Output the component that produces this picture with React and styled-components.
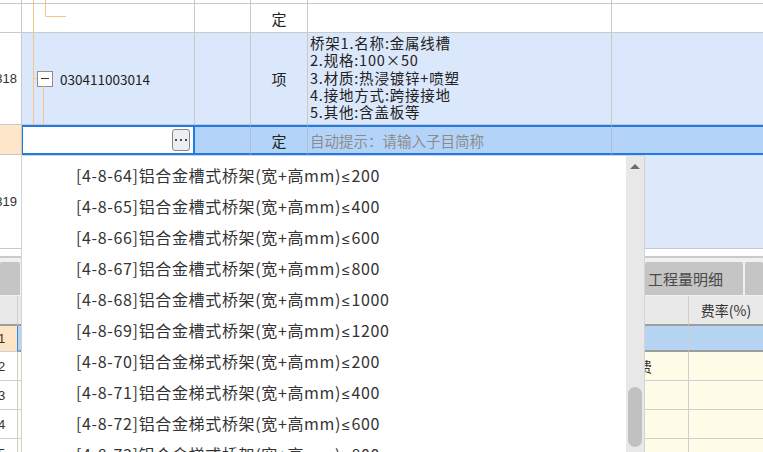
import React from 'react';
import styled, { createGlobalStyle } from 'styled-components';

const GlobalStyle = createGlobalStyle`
  * { box-sizing: border-box; }
  html, body { margin: 0; padding: 0; background: #fff; }
  body {
    font-family: "Noto Sans CJK SC", "Liberation Sans", sans-serif;
    color: #222;
    overflow: hidden;
  }
`;

const TOP_COLS = '22px 173px 56px 57px 304px 1fr';
const BOTTOM_COLS = '18px 100px 420px 151px 1fr';

const Page = styled.div`
  position: relative;
  width: 763px;
  height: 452px;
  overflow: hidden;
  background: #fff;
`;

const Row = styled.div`
  display: grid;
  grid-template-columns: ${p => p.$cols || TOP_COLS};
  height: ${p => p.$h}px;
`;

const Cell = styled.div`
  position: relative;
  display: flex;
  align-items: ${p => p.$top ? 'flex-start' : 'center'};
  justify-content: ${p => p.$align || 'flex-start'};
  overflow: hidden;
  white-space: nowrap;
  background: ${p => p.$bg || 'transparent'};
  border-right: ${p => p.$last ? 'none' : `1px solid ${p.$line || '#c9c9c9'}`};
  border-bottom: ${p => `${p.$bottomW || 1}px solid ${p.$bottom || '#c9c9c9'}`};
  font-size: 15px;
  color: #222;
`;

const RowNo = styled.span`
  font-family: "Liberation Sans", sans-serif;
  font-size: 13px;
  color: #333;
  padding-right: ${p => p.$right ? 4 : 0}px;
  margin-left: ${p => p.$right ? 0 : -2}px;
`;

const TreeSvg = styled.svg`
  position: absolute;
  left: 0;
  top: 0;
  pointer-events: none;
`;

const TreeLine = ({ h, children }) => (
  <TreeSvg width="173" height={h} viewBox={`0 0 173 ${h}`}>
    <g stroke="#f7c48a" strokeWidth="1" fill="none">{children}</g>
  </TreeSvg>
);

const CodeWrap = styled.div`
  display: flex;
  align-items: center;
  gap: 7px;
  padding-left: 15px;
`;

const MinusBox = styled.span`
  display: inline-flex;
  align-items: center;
  justify-content: center;
  width: 16px;
  height: 16px;
  border: 1px solid #8d8d8d;
  background: #fff;
  &::after {
    content: '';
    width: 8px;
    height: 1px;
    background: #333;
  }
`;

const Code = styled.span`
  font-size: 13.5px;
  color: #222;
`;

const Desc = styled.div`
  display: flex;
  flex-direction: column;
  padding: 1px 0 0 2px;
  font-size: 14.5px;
  letter-spacing: 0.8px;
  color: #222;
  span {
    display: block;
    height: 17.3px;
    line-height: 17.3px;
  }
`;

const EditBox = styled.div`
  display: flex;
  align-items: center;
  justify-content: flex-end;
  margin-left: -1px;
  padding-right: 3px;
  background: #fff;
  border: 2px solid #1f7be6;
`;

const MoreButton = styled.span`
  display: flex;
  align-items: center;
  justify-content: center;
  gap: 3px;
  width: 18px;
  height: 22px;
  border: 1px solid #868686;
  border-radius: 3px;
  background: #eceef3;
  span {
    width: 2px;
    height: 2px;
    background: #4a4a4a;
  }
`;

const EditCell = styled(Cell)`
  background: #b3d4f8;
  border-top: 2px solid #1f7be6;
  border-bottom: 2px solid #1f7be6;
  border-right-color: #a7bfd9;
`;

const Hint = styled.span`
  padding-left: 2px;
  font-size: 14.5px;
  color: #8c8c8c;
`;

const Gap = styled.div`
  height: 9px;
  background: #fff;
  border-bottom: 2px solid #cacaca;
`;

const TabBar = styled.div`
  display: flex;
  align-items: flex-start;
  gap: 2px;
  height: 38px;
  padding-top: 4px;
  background: #f0f0f0;
`;

const Tab = styled.div`
  flex: ${p => p.$grow ? 1 : 'none'};
  width: ${p => p.$w ? `${p.$w}px` : 'auto'};
  height: 33px;
  display: flex;
  align-items: center;
  padding-left: 3px;
  border-radius: 2px 2px 0 0;
  background: ${p => p.$grow ? 'transparent' : '#c5c5c5'};
  font-size: 15px;
  color: #4a4a4a;
  white-space: nowrap;
  overflow: hidden;
`;

const Dropdown = styled.div`
  position: absolute;
  left: 21px;
  top: 155px;
  width: 624px;
  height: 310px;
  display: flex;
  background: #fff;
  border: 1px solid #d3d3d3;
`;

const List = styled.ul`
  flex: 1;
  margin: 0;
  padding: 4px 0 0 54px;
  list-style: none;
`;

const Item = styled.li`
  height: 31px;
  line-height: 31px;
  font-size: 16px;
  letter-spacing: 0.65px;
  color: #333;
  white-space: nowrap;
`;

const LessEq = styled.span`
  font-family: "Liberation Sans", "DejaVu Sans", sans-serif;
  font-size: 14px;
  margin: 0 1px;
`;

const Scrollbar = styled.div`
  width: 18px;
  display: flex;
  flex-direction: column;
  align-items: center;
  background: #e8e8e8;
`;

const UpArrow = styled.div`
  height: 20px;
  padding-top: 8px;
  &::before {
    content: '';
    display: block;
    width: 0;
    height: 0;
    border-left: 5px solid transparent;
    border-right: 5px solid transparent;
    border-bottom: 5px solid #6b6b6b;
  }
`;

const Thumb = styled.div`
  width: 14px;
  height: 60px;
  margin-top: 211px;
  border-radius: 7px;
  background: #c1c1c1;
`;

const CellText = styled.span`
  font-size: 14px;
  color: #333;
  padding-left: ${p => p.$pad || 0}px;
`;

const items = [
  ['[4-8-64]铝合金槽式桥架(宽+高mm)', '200'],
  ['[4-8-65]铝合金槽式桥架(宽+高mm)', '400'],
  ['[4-8-66]铝合金槽式桥架(宽+高mm)', '600'],
  ['[4-8-67]铝合金槽式桥架(宽+高mm)', '800'],
  ['[4-8-68]铝合金槽式桥架(宽+高mm)', '1000'],
  ['[4-8-69]铝合金槽式桥架(宽+高mm)', '1200'],
  ['[4-8-70]铝合金梯式桥架(宽+高mm)', '200'],
  ['[4-8-71]铝合金梯式桥架(宽+高mm)', '400'],
  ['[4-8-72]铝合金梯式桥架(宽+高mm)', '600'],
  ['[4-8-73]铝合金梯式桥架(宽+高mm)', '800'],
];

const descLines = [
  '桥架1.名称:金属线槽',
  '2.规格:100×50',
  '3.材质:热浸镀锌+喷塑',
  '4.接地方式:跨接接地',
  '5.其他:含盖板等',
];

const BLUE = '#dbe7fb';
const LIGHT_BLUE = '#dde9fb';

function BottomRow({ no, kind, h, text }) {
  const selected = kind === 'selected';
  const header = kind === 'header';
  const bg = header ? '#e9e9e9' : selected ? '#b6d5f2' : '#fffde8';
  const bottom = header || selected ? '#9d9d9d' : '#cfcfcf';
  const bw = header || selected ? 2 : 1;
  return (
    <Row $cols={BOTTOM_COLS} $h={h}>
      <Cell
        $bg={header ? '#e9e9e9' : selected ? '#fde4c4' : '#fff'}
        $bottom={header ? '#9d9d9d' : '#cfcfcf'}
        $bottomW={header ? 2 : 1}
        $line={selected ? '#3c8ae0' : '#cfcfcf'}
      >
        {no && <RowNo>{no}</RowNo>}
      </Cell>
      <Cell $bg={bg} $bottom={bottom} $bottomW={bw} $line="#cfcfcf" />
      <Cell $bg={bg} $bottom={bottom} $bottomW={bw} $line="#cfcfcf" />
      <Cell $bg={bg} $bottom={bottom} $bottomW={bw} $line="#cfcfcf">
        {text && <CellText $pad={16}>{text}</CellText>}
      </Cell>
      <Cell $bg={bg} $bottom={bottom} $bottomW={bw} $align="center" $last>
        {header && <CellText>费率(%)</CellText>}
      </Cell>
    </Row>
  );
}

export default function App() {
  return (
    <Page>
      <GlobalStyle />

      <Row $h={4}>
        <Cell />
        <Cell>
          <TreeLine h={4}>
            <path d="M11.5 0V4M23.5 0V4" />
          </TreeLine>
        </Cell>
        <Cell />
        <Cell />
        <Cell />
        <Cell $last />
      </Row>

      <Row $h={29}>
        <Cell />
        <Cell>
          <TreeLine h={29}>
            <path d="M11.5 0V29M23.5 0V12.5H44" />
          </TreeLine>
        </Cell>
        <Cell />
        <Cell $align="center">定</Cell>
        <Cell />
        <Cell $last />
      </Row>

      <Row $h={92}>
        <Cell $align="flex-end">
          <RowNo $right>318</RowNo>
        </Cell>
        <Cell $bg={BLUE}>
          <TreeLine h={92}>
            <path d="M11.5 0V92M11 45.5H15M21.5 53V92" />
          </TreeLine>
          <CodeWrap>
            <MinusBox />
            <Code>030411003014</Code>
          </CodeWrap>
        </Cell>
        <Cell $bg={BLUE} />
        <Cell $bg={BLUE} $align="center">项</Cell>
        <Cell $bg={BLUE} $top>
          <Desc>
            {descLines.map(l => <span key={l}>{l}</span>)}
          </Desc>
        </Cell>
        <Cell $bg={BLUE} $last />
      </Row>

      <Row $h={30}>
        <Cell $bg="#fde6c9" />
        <EditBox>
          <MoreButton>
            <span />
            <span />
            <span />
          </MoreButton>
        </EditBox>
        <EditCell />
        <EditCell $align="center">定</EditCell>
        <EditCell>
          <Hint>自动提示：请输入子目简称</Hint>
        </EditCell>
        <EditCell $last />
      </Row>

      <Row $h={94}>
        <Cell $align="flex-end">
          <RowNo $right>319</RowNo>
        </Cell>
        <Cell $bg={LIGHT_BLUE} />
        <Cell $bg={LIGHT_BLUE} />
        <Cell $bg={LIGHT_BLUE} />
        <Cell $bg={LIGHT_BLUE} />
        <Cell $bg={LIGHT_BLUE} $last />
      </Row>

      <Gap />

      <TabBar>
        <Tab $w={20} />
        <Tab $grow />
        <Tab $w={98}>工程量明细</Tab>
        <Tab $w={18} />
      </TabBar>

      <BottomRow kind="header" h={30} />
      <BottomRow kind="selected" no="1" h={26} />
      <BottomRow no="2" h={29} text="分部分项工程费" />
      <BottomRow no="3" h={29} />
      <BottomRow no="4" h={29} />
      <BottomRow no="5" h={29} />

      <Dropdown>
        <List>
          {items.map(([name, limit]) => (
            <Item key={name + limit}>
              {name}<LessEq>≤</LessEq>{limit}
            </Item>
          ))}
        </List>
        <Scrollbar>
          <UpArrow />
          <Thumb />
        </Scrollbar>
      </Dropdown>
    </Page>
  );
}
